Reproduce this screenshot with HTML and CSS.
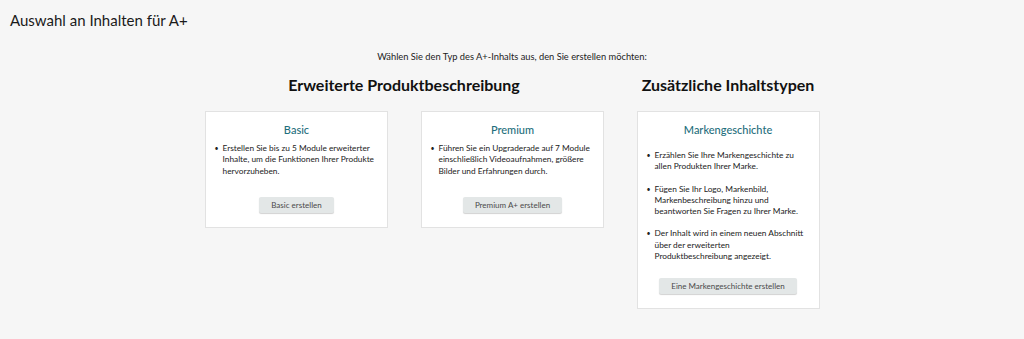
FILE: index.html
```html
<!DOCTYPE html>
<html lang="de">
<head>
    <meta charset="UTF-8">
    <meta name="viewport" content="width=device-width, initial-scale=1.0">
    <title>Auswahl an Inhalten für A+</title>
    <link rel="stylesheet" href="styles.css">
</head>
<body>
    <div class="page-title">Auswahl an Inhalten für A+</div>

    <div class="intro">Wählen Sie den Typ des A+-Inhalts aus, den Sie erstellen möchten:</div>

    <div class="sections">
        <div class="section">
            <h2>Erweiterte Produktbeschreibung</h2>
            <div class="cards">
                <div class="card">
                    <h3>Basic</h3>
                    <ul>
                        <li>Erstellen Sie bis zu 5 Module erweiterter Inhalte, um die Funktionen Ihrer Produkte hervorzuheben.</li>
                    </ul>
                    <button class="btn">Basic erstellen</button>
                </div>
                <div class="card">
                    <h3>Premium</h3>
                    <ul>
                        <li>Führen Sie ein Upgraderade auf 7 Module einschließlich Videoaufnahmen, größere Bilder und Erfahrungen durch.</li>
                    </ul>
                    <button class="btn">Premium A+ erstellen</button>
                </div>
            </div>
        </div>

        <div class="section">
            <h2>Zusätzliche Inhaltstypen</h2>
            <div class="cards">
                <div class="card card-brand">
                    <h3>Markengeschichte</h3>
                    <ul>
                        <li>Erzählen Sie Ihre Markengeschichte zu allen Produkten Ihrer Marke.</li>
                        <li>Fügen Sie Ihr Logo, Markenbild, Markenbeschreibung hinzu und beantworten Sie Fragen zu Ihrer Marke.</li>
                        <li>Der Inhalt wird in einem neuen Abschnitt über der erweiterten Produktbeschreibung angezeigt.</li>
                    </ul>
                    <button class="btn">Eine Markengeschichte erstellen</button>
                </div>
            </div>
        </div>
    </div>
</body>
</html>
```

FILE: styles.css
```css
* {
    box-sizing: border-box;
    margin: 0;
    padding: 0;
}

body {
    background-color: #f6f6f6;
    font-family: Lato, "Noto Sans", Arial, sans-serif;
    color: #111;
    height: 339px;
    overflow: hidden;
}

.page-title {
    font-size: 15px;
    line-height: 20px;
    padding: 10px 0 0 10px;
    color: #1a1a1a;
}

.intro {
    text-align: center;
    font-size: 9.3px;
    line-height: 14px;
    margin-top: 20px;
    color: #222;
}

.sections {
    display: flex;
    justify-content: center;
    gap: 33px;
    margin-top: 11px;
}

.section h2 {
    font-size: 16px;
    font-weight: 700;
    text-align: center;
    line-height: 20px;
    color: #111;
    margin-bottom: 16px;
}

.cards {
    display: flex;
    gap: 33px;
    align-items: flex-start;
}

.card {
    width: 183px;
    background-color: #fff;
    border: 1px solid #e2e2e2;
    padding: 11px 11px 14px 7px;
    text-align: center;
}

.card-brand {
    padding-right: 14px;
}

.card h3 {
    font-size: 11px;
    font-weight: 500;
    color: #1f6f7d;
    line-height: 14px;
    margin-bottom: 6px;
    padding-left: 5px;
}

.card ul {
    text-align: left;
    list-style: none;
    font-size: 8.3px;
    line-height: 11.3px;
    color: #222;
}

.card li {
    display: flex;
}

.card li::before {
    content: "•";
    flex: 0 0 8px;
    padding-left: 2px;
    font-size: 7px;
}

.card-brand h3 {
    padding-left: 7px;
}

.card-brand ul {
    margin-top: 13px;
}

.card-brand li + li {
    margin-top: 11px;
}

.btn {
    display: inline-block;
    margin-top: 20px;
    margin-left: 5px;
    background-color: #e3e7e7;
    border: none;
    border-radius: 2px;
    box-shadow: 0 1px 1px rgba(0, 0, 0, 0.18);
    font-family: inherit;
    font-size: 8px;
    color: #4a4a4a;
    height: 16px;
    padding: 0 12px;
    cursor: pointer;
}

.card-brand .btn {
    margin-top: 16px;
    margin-left: 7px;
}
```
